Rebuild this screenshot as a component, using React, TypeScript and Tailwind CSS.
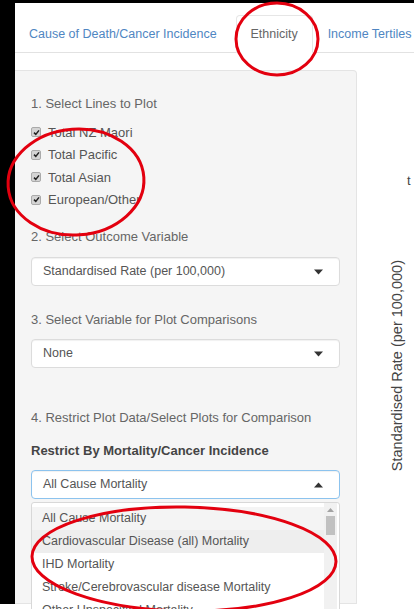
import { useState } from "react"

const lines = ["Total NZ Maori", "Total Pacific", "Total Asian", "European/Other"]

const outcomes = [
  "All Cause Mortality",
  "Cardiovascular Disease (all) Mortality",
  "IHD Mortality",
  "Stroke/Cerebrovascular disease Mortality",
  "Other Unspecified Mortality",
]

const tabs = [
  { label: "Cause of Death/Cancer Incidence", cls: "pl-[13px] pr-[18px]" },
  { label: "Ethnicity", cls: "w-[77px] justify-center mr-[1px]" },
  { label: "Income Tertiles", cls: "pl-[13px] pr-[13px]" },
]

function Caret({ up }: { up?: boolean }) {
  return (
    <svg width="9" height="6" viewBox="0 0 9 6" className="shrink-0">
      {up ? <path d="M0 5.5 L4.5 0.5 L9 5.5 Z" fill="#333" /> : <path d="M0 0.5 L9 0.5 L4.5 5.5 Z" fill="#333" />}
    </svg>
  )
}

function Select({ value, focused, up }: { value: string; focused?: boolean; up?: boolean }) {
  return (
    <div
      className={
        "flex items-center justify-between h-[29px] pl-[11px] pr-[16px] bg-white rounded-[4px] border text-[12.5px] text-[#555] shadow-[inset_0_1px_1px_rgba(0,0,0,0.06)] " +
        (focused ? "border-[#8cc3ee]" : "border-[#dcdcdc]")
      }
    >
      <span>{value}</span>
      <Caret up={up} />
    </div>
  )
}

function CheckRow({ label }: { label: string }) {
  return (
    <label className="flex items-center gap-[7px] h-[22.5px] text-[13px] text-[#555]">
      <span className="w-[10px] h-[10px] rounded-[2px] bg-[#d4d4d4] border border-[#aaa] flex items-center justify-center">
        <svg width="7" height="7" viewBox="0 0 7 7">
          <path d="M1 3.6 L2.8 5.4 L6 1.4" stroke="#222" strokeWidth="1.5" fill="none" />
        </svg>
      </span>
      {label}
    </label>
  )
}

export default function App() {
  const [tab] = useState("Ethnicity")

  return (
    <div className="relative w-[414px] h-[609px] overflow-hidden bg-white font-['Liberation_Sans',Arial,sans-serif]">
      <div className="h-[3px] bg-black" />
      <div className="flex h-[601px]">
        <div className="w-[15px] bg-black shrink-0" />
        <div className="flex-1 flex flex-col min-w-0">
          {/* tab strip */}
          <nav className="mt-[12px] flex items-end border-b border-[#e2e2e2] text-[12.5px] whitespace-nowrap">
            {tabs.map(t => (
              <span
                key={t.label}
                className={
                  "h-[38px] flex items-center shrink-0 -mb-px rounded-t-[4px] border " +
                  t.cls +
                  " " +
                  (t.label === tab
                    ? "border-[#e6e6e6] border-b-white bg-white text-[#666]"
                    : "border-transparent text-[#4f86c2]")
                }
              >
                {t.label}
              </span>
            ))}
          </nav>

          <div className="flex flex-1 min-h-0">
            {/* sidebar well */}
            <aside className="mt-[17px] w-[342px] shrink-0 bg-[#f5f5f5] border border-[#e4e4e4] border-l-0 rounded-tr-[4px] pl-[16px] pr-[16px] pt-[24px] text-[13px] text-[#666]">
              <div className="h-[18px] leading-[18px]">1. Select Lines to Plot</div>
              <div className="mt-[8px]">
                {lines.map(l => (
                  <CheckRow key={l} label={l} />
                ))}
              </div>
              <div className="mt-[17px] h-[18px] leading-[18px]">2. Select Outcome Variable</div>
              <div className="mt-[11px]">
                <Select value="Standardised Rate (per 100,000)" />
              </div>
              <div className="mt-[25px] h-[18px] leading-[18px]">3. Select Variable for Plot Comparisons</div>
              <div className="mt-[10px]">
                <Select value="None" />
              </div>
              <div className="mt-[41px] h-[18px] leading-[18px]">4. Restrict Plot Data/Select Plots for Comparison</div>
              <div className="mt-[15px] h-[18px] leading-[18px] font-bold text-[#444]">Restrict By Mortality/Cancer Incidence</div>
              <div className="mt-[10px]">
                <Select value="All Cause Mortality" focused up />
              </div>
              {/* open dropdown list */}
              <div className="mt-[3px] h-[120px] flex bg-white border border-[#d8d8d8] rounded-t-[3px] text-[12.5px] text-[#555] overflow-hidden">
                <ul className="flex-1 pt-[4px]">
                  {outcomes.map((o, i) => (
                    <li
                      key={o}
                      className={
                        "h-[23px] leading-[23px] pl-[10px] whitespace-nowrap " +
                        (i === 0 ? "bg-[#f4f4f4]" : i === 1 ? "bg-[#eeeeee]" : "")
                      }
                    >
                      {o}
                    </li>
                  ))}
                </ul>
                <div className="w-[13px] mr-[2px] bg-[#f1f1f1] flex flex-col items-center pt-[5px]">
                  <svg width="7" height="4" viewBox="0 0 7 4">
                    <path d="M0 4 L3.5 0 L7 4 Z" fill="#a3a3a3" />
                  </svg>
                  <div className="mt-[4px] w-[9px] h-[19px] bg-[#c1c1c1]" />
                </div>
              </div>
            </aside>

            {/* plot area */}
            <main className="relative flex-1 min-w-0">
              <span className="absolute left-[50px] top-[118px] text-[13px] text-[#444]">t</span>
              <div className="h-full flex items-center justify-end pr-[5px] pt-[74px]">
                <span className="[writing-mode:vertical-rl] rotate-180 text-[14.5px] text-[#444] whitespace-nowrap">
                  Standardised Rate (per 100,000)
                </span>
              </div>
            </main>
          </div>
        </div>
      </div>

      {/* red hand-drawn rings */}
      <svg className="absolute inset-0 pointer-events-none" width="414" height="609" viewBox="0 0 414 609">
        <g fill="none" stroke="#e3000f" strokeWidth="3">
          <ellipse cx="277" cy="39" rx="41" ry="36" />
          <ellipse cx="76" cy="182" rx="68" ry="53" transform="rotate(-4 76 182)" />
          <ellipse cx="184" cy="559" rx="152" ry="52" transform="rotate(1 184 559)" />
        </g>
      </svg>
    </div>
  )
}
